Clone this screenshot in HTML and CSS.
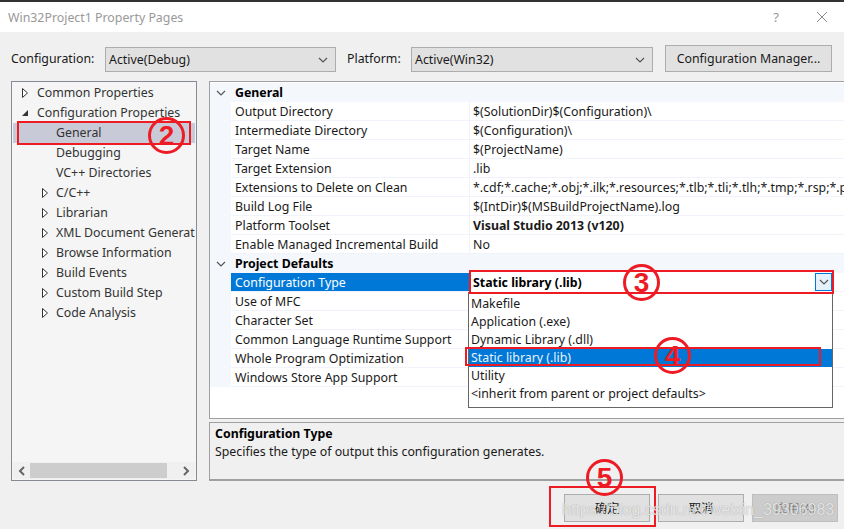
FILE: index.html
```html
<!DOCTYPE html>
<html lang="en">
<head>
    <meta charset="UTF-8">
    <meta name="viewport" content="width=device-width, initial-scale=1.0">
    <title>Win32Project1 Property Pages</title>
    <link rel="stylesheet" href="styles.css">
</head>
<body>
    <svg class="defs" width="0" height="0">
        <symbol id="tri-closed" viewBox="0 0 8 12"><path d="M1.5 1.5 L6.5 6 L1.5 10.5 Z" fill="#fff" stroke="#333" stroke-width="1"/></symbol>
        <symbol id="tri-open" viewBox="0 0 8 12"><path d="M7 3 V9 H1 Z" fill="#333"/></symbol>
        <symbol id="chev" viewBox="0 0 10 6"><path d="M1 1 L5 5 L9 1" fill="none" stroke="#555" stroke-width="1.2"/></symbol>
    </svg>
    <div class="dialog">
        <header class="titlebar">
            <span class="title">Win32Project1 Property Pages</span>
            <span class="help">?</span>
            <svg class="close" width="12" height="12" viewBox="0 0 12 12"><path d="M1 1 L11 11 M11 1 L1 11" stroke="#8a8a8a" stroke-width="1" fill="none"/></svg>
        </header>
        <div class="content">
            <div class="toolbar">
                <label class="config-label">Configuration:</label>
                <div class="combo combo-config"><span>Active(Debug)</span><svg class="chev"><use href="#chev"/></svg></div>
                <label class="platform-label">Platform:</label>
                <div class="combo combo-platform"><span>Active(Win32)</span><svg class="chev"><use href="#chev"/></svg></div>
                <button class="btn manager">Configuration Manager...</button>
            </div>
            <div class="panes">
                <nav class="tree">
                    <ul class="tree-list">
                        <li class="node"><svg class="tri"><use href="#tri-closed"/></svg>Common Properties</li>
                        <li class="node"><svg class="tri"><use href="#tri-open"/></svg>Configuration Properties</li>
                        <li class="node child selected">General</li>
                        <li class="node child">Debugging</li>
                        <li class="node child">VC++ Directories</li>
                        <li class="node child"><svg class="tri"><use href="#tri-closed"/></svg>C/C++</li>
                        <li class="node child"><svg class="tri"><use href="#tri-closed"/></svg>Librarian</li>
                        <li class="node child"><svg class="tri"><use href="#tri-closed"/></svg>XML Document Generator</li>
                        <li class="node child"><svg class="tri"><use href="#tri-closed"/></svg>Browse Information</li>
                        <li class="node child"><svg class="tri"><use href="#tri-closed"/></svg>Build Events</li>
                        <li class="node child"><svg class="tri"><use href="#tri-closed"/></svg>Custom Build Step</li>
                        <li class="node child"><svg class="tri"><use href="#tri-closed"/></svg>Code Analysis</li>
                    </ul>
                    <div class="hscroll">
                        <svg width="8" height="10" viewBox="0 0 8 10"><path d="M6 1 L2 5 L6 9" fill="none" stroke="#666" stroke-width="2"/></svg>
                        <div class="thumb"></div>
                        <svg width="8" height="10" viewBox="0 0 8 10"><path d="M2 1 L6 5 L2 9" fill="none" stroke="#666" stroke-width="2"/></svg>
                    </div>
                </nav>
                <div class="right">
                    <section class="grid">
                        <div class="group"><svg class="chev"><use href="#chev"/></svg><b>General</b></div>
                        <div class="row"><span class="name">Output Directory</span><span class="value">$(SolutionDir)$(Configuration)\</span></div>
                        <div class="row"><span class="name">Intermediate Directory</span><span class="value">$(Configuration)\</span></div>
                        <div class="row"><span class="name">Target Name</span><span class="value">$(ProjectName)</span></div>
                        <div class="row"><span class="name">Target Extension</span><span class="value">.lib</span></div>
                        <div class="row"><span class="name">Extensions to Delete on Clean</span><span class="value">*.cdf;*.cache;*.obj;*.ilk;*.resources;*.tlb;*.tli;*.tlh;*.tmp;*.rsp;*.pgc;*.pgd;*.meta</span></div>
                        <div class="row"><span class="name">Build Log File</span><span class="value">$(IntDir)$(MSBuildProjectName).log</span></div>
                        <div class="row"><span class="name">Platform Toolset</span><span class="value"><b>Visual Studio 2013 (v120)</b></span></div>
                        <div class="row"><span class="name">Enable Managed Incremental Build</span><span class="value">No</span></div>
                        <div class="group"><svg class="chev"><use href="#chev"/></svg><b>Project Defaults</b></div>
                        <div class="row active"><span class="name">Configuration Type</span><span class="value"></span></div>
                        <div class="row"><span class="name">Use of MFC</span><span class="value"></span></div>
                        <div class="row"><span class="name">Character Set</span><span class="value"></span></div>
                        <div class="row"><span class="name">Common Language Runtime Support</span><span class="value"></span></div>
                        <div class="row"><span class="name">Whole Program Optimization</span><span class="value"></span></div>
                        <div class="row"><span class="name">Windows Store App Support</span><span class="value"></span></div>
                    </section>
                    <section class="desc">
                        <b>Configuration Type</b>
                        <p>Specifies the type of output this configuration generates.</p>
                    </section>
                </div>
            </div>
            <footer class="actions">
                <button class="btn action">确定</button>
                <button class="btn action">取消</button>
                <button class="btn action disabled">应用(A)</button>
            </footer>
        </div>
    </div>

    <!-- open dropdown -->
    <div class="type-select">
        <b>Static library (.lib)</b>
        <span class="type-arrow"><svg class="chev"><use href="#chev"/></svg></span>
    </div>
    <ul class="type-list">
        <li>Makefile</li>
        <li>Application (.exe)</li>
        <li>Dynamic Library (.dll)</li>
        <li class="picked">Static library (.lib)</li>
        <li>Utility</li>
        <li>&lt;inherit from parent or project defaults&gt;</li>
    </ul>

    <!-- red notes drawn on the screenshot -->
    <div class="mark mark-general"></div>
    <div class="mark mark-type"></div>
    <div class="mark mark-static"></div>
    <div class="mark mark-ok"></div>
    <div class="step step-2">2</div>
    <div class="step step-3">3</div>
    <div class="step step-4">4</div>
    <div class="step step-5">5</div>

    <div class="watermark">https://blog.csdn.net/weixin_39306983</div>
</body>
</html>
```

FILE: styles.css
```css
* {
    box-sizing: border-box;
}

html, body {
    margin: 0;
    padding: 0;
}

body {
    position: relative;
    width: 844px;
    height: 529px;
    overflow: hidden;
    font-family: "Noto Sans", "Noto Sans CJK SC", sans-serif;
    font-size: 12.35px;
    color: #1a1a1a;
    background-color: #f0f0f0;
}

.defs {
    position: absolute;
}

ul {
    list-style: none;
    margin: 0;
    padding: 0;
}

.dialog {
    height: 529px;
    display: flex;
    flex-direction: column;
    border-top: 2px solid #333;
}

.titlebar {
    height: 30px;
    flex: none;
    display: flex;
    align-items: center;
    padding-left: 8px;
    background-color: #fff;
}

.title {
    flex: 1;
    color: #999;
    font-size: 12.35px;
}

.help {
    margin-right: 37px;
    color: #999;
    font-size: 13px;
}

.close {
    margin-right: 16px;
}

.content {
    flex: 1;
    display: flex;
    flex-direction: column;
    padding: 13px 11px 0 11px;
}

.toolbar {
    display: flex;
    align-items: center;
    height: 27px;
}

.config-label {
    width: 94px;
}

.platform-label {
    width: 64px;
    margin-left: 11px;
}

.combo {
    height: 25px;
    margin-top: 2px;
    display: flex;
    align-items: center;
    justify-content: space-between;
    padding: 0 4px 0 3px;
    background-color: #e1e1e1;
    border: 1px solid #adadad;
}

.combo-config {
    width: 231px;
}

.combo-platform {
    width: 242px;
}

svg.chev {
    width: 10px;
    height: 6px;
    margin-right: 3px;
}

.btn {
    font-family: inherit;
    font-size: 12.35px;
    color: #1a1a1a;
    background-color: #e1e1e1;
    border: 1px solid #adadad;
    padding: 0;
}

.manager {
    width: 167px;
    height: 27px;
    margin-left: 12px;
}

.panes {
    display: flex;
    gap: 12px;
    margin-top: 9px;
    height: 400px;
}

.tree {
    width: 186px;
    display: flex;
    flex-direction: column;
    background-color: #f5f5f5;
    border: 1px solid #868a94;
}

.tree-list {
    flex: 1;
    padding-top: 1px;
    overflow: hidden;
}

.node {
    height: 20px;
    line-height: 20px;
    padding-left: 25px;
    margin-right: 1px;
    position: relative;
    white-space: nowrap;
    overflow: hidden;
    color: #333;
}

.node.child {
    padding-left: 44px;
}

.node.selected {
    margin-left: 1px;
    padding-left: 43px;
    background-color: #c9cad8;
}

.tri {
    position: absolute;
    left: 9px;
    top: 4px;
    width: 8px;
    height: 12px;
}

.child .tri {
    left: 29px;
}

.hscroll {
    height: 17px;
    margin: 0 1px 1px 1px;
    display: flex;
    align-items: center;
    justify-content: space-between;
    padding: 0 5px 0 5px;
    background-color: #f0f0f0;
}

.thumb {
    width: 137px;
    height: 15px;
    margin-left: 1px;
    margin-right: 12px;
    background-color: #cdcdcd;
}

.right {
    flex: 1;
    display: flex;
    flex-direction: column;
    gap: 3px;
}

.grid {
    height: 338px;
    padding-top: 1px;
    background-color: #fff;
    border: 1px solid #a0a0a0;
    overflow: hidden;
}

.group {
    height: 19px;
    display: flex;
    align-items: center;
    padding-left: 6px;
    background-color: #f4f7fc;
    color: #000;
}

.group svg.chev {
    margin-right: 9px;
}

.row {
    height: 19px;
    display: flex;
    margin-left: 21px;
    box-shadow: -21px 0 0 #f4f7fc;
    border-bottom: 1px solid #f0f3f9;
    line-height: 20px;
}

.name {
    width: 239px;
    flex: none;
    padding-left: 4px;
    border-right: 1px solid #f0f3f9;
    white-space: nowrap;
    overflow: hidden;
}

.value {
    flex: 1;
    padding-left: 3px;
    white-space: nowrap;
    overflow: hidden;
}

.row.active .name {
    background-color: #0078d7;
    color: #fff;
}

.desc {
    height: 59px;
    padding: 2px 5px;
    border: 1px solid #a0a0a0;
    border-bottom-width: 2px;
    line-height: 18px;
}

.desc b {
    color: #000;
}

.desc p {
    margin: 0;
}

.actions {
    display: flex;
    justify-content: flex-end;
    gap: 8px;
    margin-top: 13px;
    margin-right: -5px;
}

.action {
    width: 86px;
    height: 28px;
}

.action.disabled {
    background-color: #ccc;
    border-color: #bfbfbf;
    color: #888;
}

/* dropdown on top of the grid */
.type-select {
    position: absolute;
    left: 469px;
    top: 272px;
    width: 363px;
    height: 20px;
    padding-left: 4px;
    line-height: 22px;
    background-color: #fff;
    color: #000;
}

.type-arrow {
    position: absolute;
    right: 0;
    top: 1px;
    width: 17px;
    height: 18px;
    display: flex;
    align-items: center;
    justify-content: center;
    background-color: #e5f1fb;
    border: 1px solid #0078d7;
}

.type-arrow svg.chev {
    margin: 0;
}

.type-list {
    position: absolute;
    left: 468px;
    top: 292px;
    width: 365px;
    height: 116px;
    padding-top: 2px;
    background-color: #fff;
    border: 1px solid #666;
}

.type-list li {
    height: 18px;
    line-height: 17px;
    padding-left: 2px;
}

.type-list .picked {
    background-color: #0078d7;
    color: #e8f2fb;
}

/* annotations */
.mark {
    position: absolute;
    border: 2px solid #ed1c24;
}

.mark-general {
    left: 17px;
    top: 121px;
    width: 174px;
    height: 24px;
}

.mark-type {
    left: 469px;
    top: 270px;
    width: 365px;
    height: 24px;
}

.mark-static {
    left: 465px;
    top: 347px;
    width: 356px;
    height: 19px;
}

.mark-ok {
    left: 549px;
    top: 486px;
    width: 107px;
    height: 41px;
}

.step {
    position: absolute;
    width: 37px;
    height: 37px;
    border: 3px solid #ed1c24;
    border-radius: 50%;
    text-align: center;
    font-family: "Liberation Sans", sans-serif;
    font-weight: bold;
    font-size: 28px;
    line-height: 31px;
    color: #ed1c24;
}

.step-2 {
    left: 148px;
    top: 117px;
}

.step-3 {
    left: 623px;
    top: 264px;
}

.step-4 {
    left: 654px;
    top: 337px;
}

.step-5 {
    left: 586px;
    top: 459px;
}

.watermark {
    position: absolute;
    left: 562px;
    top: 500px;
    font-family: "Liberation Sans", sans-serif;
    font-size: 16px;
    line-height: 20px;
    white-space: nowrap;
    color: rgba(255, 255, 255, 0.75);
    text-shadow: 0 0 1px rgba(90, 90, 90, 0.6);
}
```
